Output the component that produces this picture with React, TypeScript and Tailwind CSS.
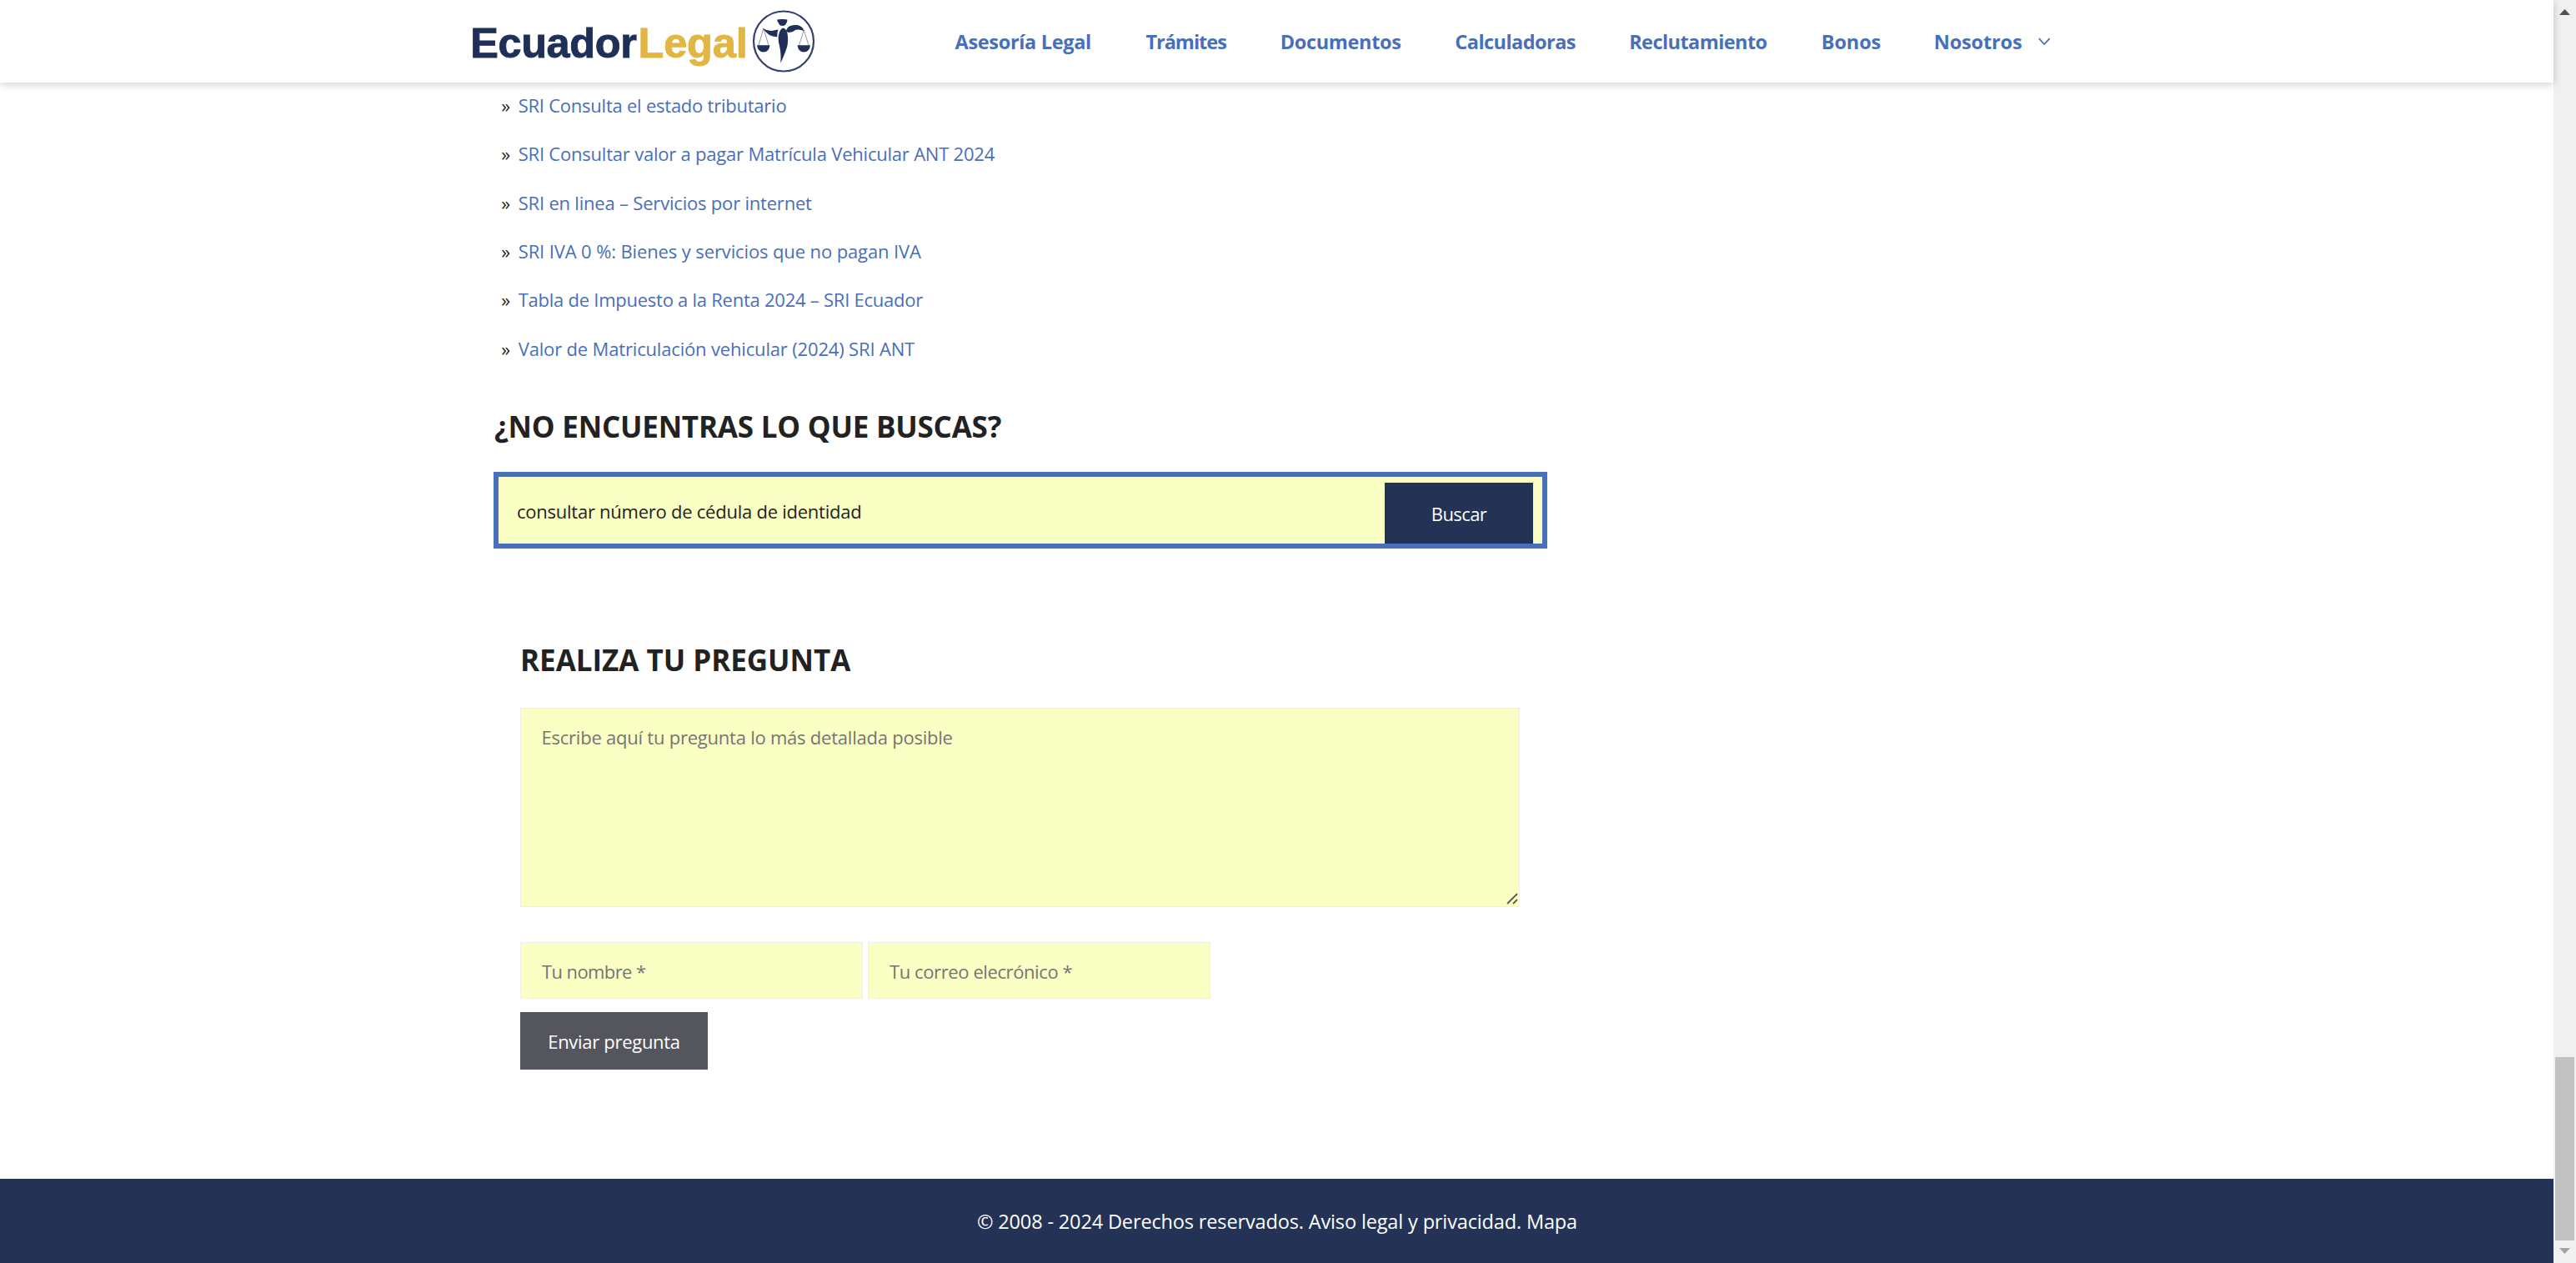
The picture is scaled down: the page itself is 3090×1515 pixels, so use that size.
const navItems = [
  { label: "Asesoría Legal", cls: "w-[228.8px] tracking-[-0.33px]" },
  { label: "Trámites", cls: "w-[161.4px] tracking-[-1px]" },
  { label: "Documentos", cls: "w-[209.6px] tracking-[-0.35px]" },
  { label: "Calculadoras", cls: "w-[208.8px] tracking-[-0.55px]" },
  { label: "Reclutamiento", cls: "w-[230.6px] tracking-[-0.57px]" },
  { label: "Bonos", cls: "w-[135px] tracking-[-0.13px]" },
  { label: "Nosotros", cls: "w-[125.5px] tracking-[-0.16px]" },
];

const links = [
  { label: "SRI Consulta el estado tributario", cls: "tracking-[-0.237px]" },
  { label: "SRI Consultar valor a pagar Matrícula Vehicular ANT 2024", cls: "tracking-[-0.21px]" },
  { label: "SRI en linea – Servicios por internet", cls: "tracking-[-0.2px]" },
  { label: "SRI IVA 0 %: Bienes y servicios que no pagan IVA", cls: "tracking-[-0.12px]" },
  { label: "Tabla de Impuesto a la Renta 2024 – SRI Ecuador", cls: "tracking-[-0.25px]" },
  { label: "Valor de Matriculación vehicular (2024) SRI ANT", cls: "tracking-[-0.165px]" },
];

function Emblem() {
  return (
    <svg className="mt-[12px] ml-[9px] h-[76px] w-[76px] shrink-0" viewBox="0 0 76 76" fill="#1f2f57">
      <circle cx="38" cy="37.5" r="36" fill="none" stroke="#33426a" strokeWidth="2.2" />
      <path d="M30.3 11.5 Q33 10.8 36.4 11 Q39.5 10.8 42.3 11.5 Q42.6 14 41.5 15.2 Q40.5 18.6 36.6 19 Q32.6 18.6 31.7 15.2 Q30.2 14 30.3 11.5Z" />
      <path d="M37.5 21.5 Q42.5 23 43 32 Q43.8 41 40.5 49 Q38 56 34.3 63.8 Q35.2 52 33 43 Q30.6 35 32.5 28 Q34 22.5 37.5 21.5Z" />
      <path d="M40.8 25.5 Q42 20.5 46 19 Q50 17.5 54 18 Q60.5 18.8 62.6 25 Q57 22.8 52.5 23.8 Q48.5 27.2 44.5 27 Q42.5 26.8 40.8 25.5Z" />
      <path d="M31.5 23.6 Q30 27 30.3 32.2 Q19.5 32.5 13.2 22 Q19 25.6 25 24.8 Q28.5 24.2 31.5 23.6Z" />
      <g fill="none" stroke="#1f2f57" strokeWidth="0.7" opacity="0.7">
        <path d="M13.8 22 L8 42.5 M13.8 22 L20 42.5" />
        <path d="M62.3 24 L56.5 42.5 M62.3 24 L68 42.5" />
      </g>
      <path d="M6 42.3 H21.5 Q20.5 50.5 13.8 50.5 Q7 50.5 6 42.3Z" />
      <path d="M54.5 42.3 H70 Q69 50.5 62.3 50.5 Q55.5 50.5 54.5 42.3Z" />
    </svg>
  );
}

function Header() {
  return (
    <header className="relative z-10 flex h-[99px] shrink-0 items-start bg-white shadow-[0_2px_10px_rgba(0,0,0,0.2)]">
      <a className="ml-[564.2px] flex h-[99px] w-[581.4px] items-start">
        <span className="flex font-['Liberation_Sans',sans-serif] text-[50.5px] leading-[103px] font-bold">
          <span className="w-[201.4px] tracking-[-0.4px] text-[#1f2f57] [-webkit-text-stroke:0.9px_#1f2f57]">
            Ecuador
          </span>
          <span className="w-[127.4px] tracking-[-0.2px] text-[#e2b644] [-webkit-text-stroke:0.9px_#e2b644]">
            Legal
          </span>
        </span>
        <Emblem />
      </a>
      <nav className="flex text-[23.5px] leading-[100px] font-bold whitespace-nowrap text-[#486fba]">
        {navItems.map((item) => (
          <a key={item.label} className={item.cls}>
            {item.label}
          </a>
        ))}
        <svg className="mt-[45px] h-[10px] w-[15px]" viewBox="0 0 15 10" fill="none" stroke="#486fba" strokeWidth="1.8">
          <path d="M0.8 1.2 L7.2 8 L13.6 1.2" />
        </svg>
      </nav>
    </header>
  );
}

function Scrollbar() {
  return (
    <div className="flex w-[27px] shrink-0 flex-col items-center bg-[#f0f0f0]">
      <svg className="mt-[11px] h-[7px] w-[13px]" viewBox="0 0 13 7">
        <path d="M6.5 0 L13 7 H0Z" fill="#505050" />
      </svg>
      <div className="mt-[1250px] h-[220px] w-[23px] bg-[#c1c1c1]" />
      <svg className="mt-[9px] h-[7px] w-[13px]" viewBox="0 0 13 7">
        <path d="M6.5 7 L13 0 H0Z" fill="#a3a3a3" />
      </svg>
    </div>
  );
}

export default function App() {
  return (
    <div className="flex h-[1515px] w-[3090px] overflow-hidden bg-white font-['Open_Sans','Noto_Sans',sans-serif] text-[22px] text-[#222222]">
      <div className="flex w-[3063px] flex-col">
        <Header />
        <main className="flex h-[1315px] flex-col pl-[592px]">
          <ul className="flex flex-col gap-[20.3px] pt-[8.2px]">
            {links.map((link) => (
              <li key={link.label} className="flex h-[38px] pl-[9.3px] leading-[38px] whitespace-nowrap">
                <span className="w-[20.4px] text-[22px]">»</span>
                <a className={`text-[#486fba] ${link.cls}`}>{link.label}</a>
              </li>
            ))}
          </ul>

          <h2 className="mt-[52.4px] h-[46px] pl-[1px] text-[35px] leading-[46px] font-bold tracking-[-0.21px] whitespace-nowrap">
            ¿NO ENCUENTRAS LO QUE BUSCAS?
          </h2>
          <form className="mt-[31px] flex h-[92px] w-[1264px] items-start border-6 border-[#486fba] bg-[#faffc4]">
            <input
              className="h-[81px] w-[1063px] bg-transparent pl-[22px] tracking-[-0.246px] outline-none"
              defaultValue="consultar número de cédula de identidad"
            />
            <button
              type="button"
              className="mt-[7px] h-[73px] w-[178px] bg-[#243355] pt-[2px] tracking-[-0.6px] text-white"
            >
              Buscar
            </button>
          </form>

          <section className="flex flex-col pt-[111.4px] pl-[32px]">
            <h2 className="h-[46px] text-[35px] leading-[46px] font-bold tracking-[-0.03px] whitespace-nowrap">
              REALIZA TU PREGUNTA
            </h2>
            <div className="relative mt-[33.6px] h-[239px] w-[1199px]">
              <textarea
                className="block h-full w-full resize-none border border-[#eeeeee] bg-[#faffc4] px-[24.5px] pt-[15.5px] leading-[36px] tracking-[-0.227px] outline-none placeholder:text-[#757575]"
                placeholder="Escribe aquí tu pregunta lo más detallada posible"
              />
              <svg
                className="absolute right-[2px] bottom-[3px] h-[14px] w-[14px]"
                viewBox="0 0 14 14"
                fill="none"
                stroke="#5c5c4c"
                strokeWidth="1.8"
              >
                <path d="M1 13 L13 1 M8 13 L13 8" />
              </svg>
            </div>
            <div className="mt-[42px] flex gap-[6px]">
              <input
                className="h-[68px] w-[411px] border border-[#eeeeee] bg-[#faffc4] pt-px pl-[25px] tracking-[-0.6px] outline-none placeholder:text-[#757575]"
                placeholder="Tu nombre *"
              />
              <input
                className="h-[68px] w-[411px] border border-[#eeeeee] bg-[#faffc4] pt-px pl-[25px] tracking-[-0.4px] outline-none placeholder:text-[#757575]"
                placeholder="Tu correo elecrónico *"
              />
            </div>
            <button
              type="button"
              className="mt-[16px] h-[69px] w-[225px] bg-[#55555e] pt-px tracking-[-0.298px] text-white"
            >
              Enviar pregunta
            </button>
          </section>
        </main>
        <footer className="h-[101px] bg-[#243355] pl-[1171.9px] text-[23.5px] leading-[103px] tracking-[-0.14px] whitespace-nowrap text-white">
          © 2008 - 2024 Derechos reservados. Aviso legal y privacidad. Mapa
        </footer>
      </div>
      <Scrollbar />
    </div>
  );
}
